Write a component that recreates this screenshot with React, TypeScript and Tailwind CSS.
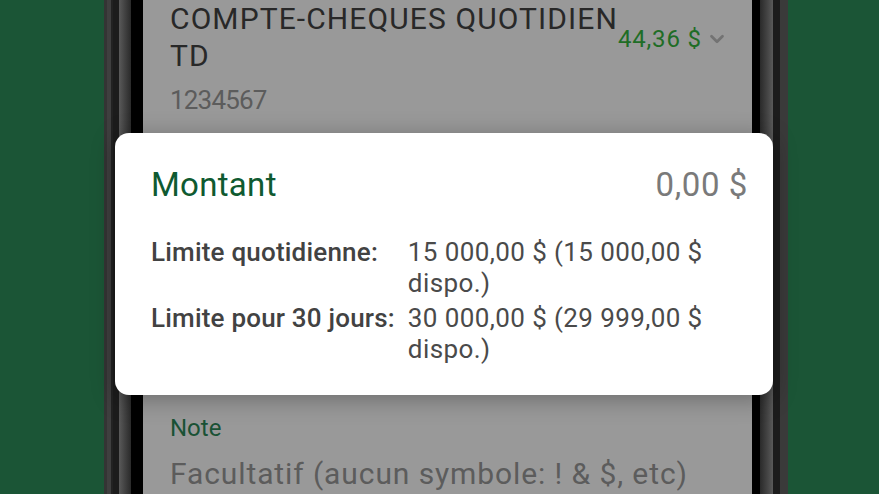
import { ChevronDown } from "lucide-react";

const limits = [
  { label: "Limite quotidienne:", value: "15 000,00 $ (15 000,00 $ dispo.)" },
  { label: "Limite pour 30 jours:", value: "30 000,00 $ (29 999,00 $ dispo.)" },
];

function FrameLeft() {
  return (
    <div className="flex h-full">
      <div className="w-[3px] bg-[#343434]" />
      <div className="w-[4px] bg-[#3f3f3f]" />
      <div className="w-[2px] bg-[#222]" />
      <div className="w-[6px] bg-[#1c1c1c]" />
      <div className="w-[12px] bg-gradient-to-r from-[#5a5a5a] to-[#2a2a2a]" />
      <div className="w-[12px] bg-black" />
    </div>
  );
}

function FrameRight() {
  return (
    <div className="flex h-full">
      <div className="w-[8px] bg-black" />
      <div className="w-[13px] bg-gradient-to-r from-[#2a2a2a] to-[#5a5a5a]" />
      <div className="w-[7px] bg-[#1c1c1c]" />
      <div className="w-[8px] bg-[#3a3a3a]" />
    </div>
  );
}

export default function App() {
  return (
    <div className="flex h-[494px] w-[879px] overflow-hidden bg-[#1b5536] font-['Roboto',sans-serif]">
      <div className="w-[104px] shrink-0" />
      <FrameLeft />

      {/* screen, dimmed behind the popup */}
      <div className="flex w-[609px] shrink-0 flex-col bg-[#999999]">
        <div className="flex items-center pl-[27px]">
          <div className="w-[448px] shrink-0 text-[30px] leading-[37px] tracking-[1.1px] text-[#282828]">
            COMPTE-CHEQUES QUOTIDIEN TD
          </div>
          <div className="flex items-center gap-[4px] pt-[3px]">
            <span className="text-[24px] leading-[28px] tracking-[0.8px] text-[#1f6d26]">44,36 $</span>
            <ChevronDown className="h-[22px] w-[22px] text-[#737373]" strokeWidth={3} />
          </div>
        </div>
        <div className="mt-[8px] pl-[27px] text-[26px] leading-[37px] tracking-[-0.8px] text-[#5c5c5c]">1234567</div>

        <div className="relative z-10 mx-[-28px] mr-[-21px] mt-[14px] rounded-[14px] bg-white pb-[30px] pl-[36px] pr-[25px] pt-[32px] shadow-[0_4px_24px_rgba(0,0,0,0.3)]">
          <div className="flex items-center justify-between leading-[40px]">
            <span className="text-[33px] tracking-[0.3px] text-[#0f5a31]">Montant</span>
            <span className="text-[33px] tracking-[0.6px] text-[#7a7a7a]">0,00 $</span>
          </div>
          <div className="mt-[32px] grid grid-cols-[auto_1fr] gap-x-[13px] gap-y-[4px] text-[26px] leading-[31px]">
            {limits.map((row) => (
              <div key={row.label} className="contents">
                <span className="font-medium tracking-[0.2px] text-[#424242]">{row.label}</span>
                <span className="tracking-[0.4px] text-[#4a4a4a]">{row.value}</span>
              </div>
            ))}
          </div>
        </div>

        <div className="mt-[19px] pl-[27px] text-[24px] leading-[28px] text-[#1a5235]">Note</div>
        <div className="mt-[15px] pl-[27px] text-[30px] leading-[34px] tracking-[0.9px] text-[#5c5c5c]">
          Facultatif (aucun symbole: ! &amp; $, etc)
        </div>
      </div>

      <FrameRight />
      <div className="flex-1" />
    </div>
  );
}
